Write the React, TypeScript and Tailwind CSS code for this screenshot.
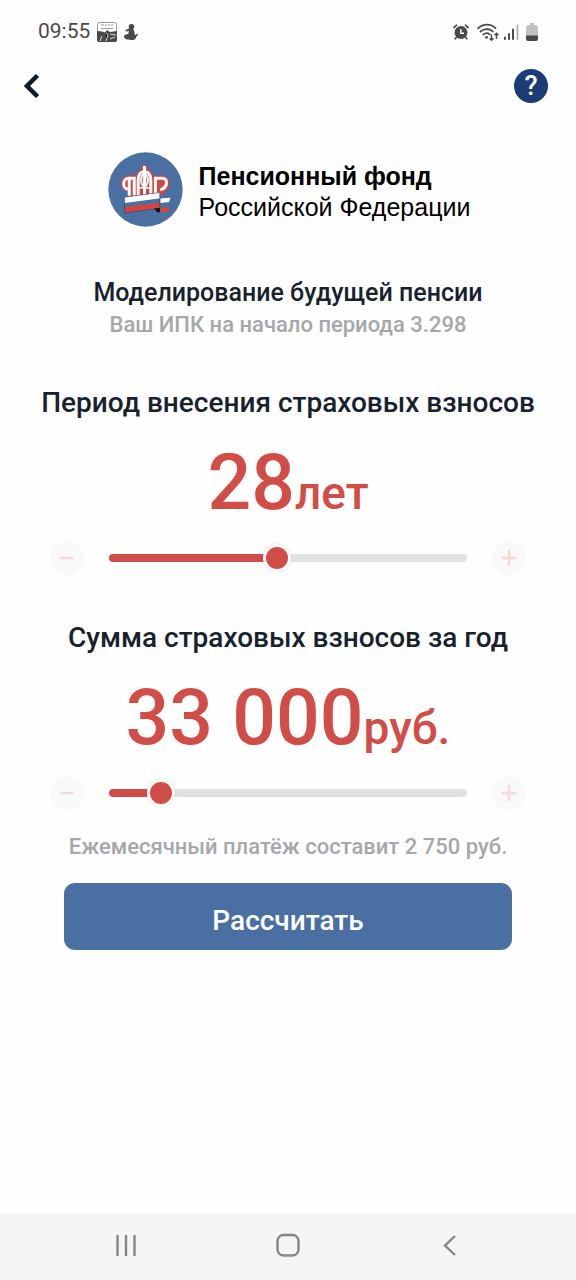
import { useState } from "react";

function AlarmIcon() {
  return (
    <svg className="h-4 w-4" viewBox="0 0 16 16" fill="none" aria-hidden="true">
      <circle cx="8" cy="8.500" r="6.500" fill="#4a4a4a" />
      <path
        d="M1 3.500l2.600-2.300M15 3.500l-2.600-2.300M3.800 13l-1.600 1.800M12.200 13l1.600 1.800"
        stroke="#4a4a4a"
        strokeWidth="1.700"
        strokeLinecap="round"
      />
      <path d="M7.800 5v4.200h3.200" stroke="#fff" strokeWidth="1.400" />
    </svg>
  );
}

function WifiIcon() {
  return (
    <svg className="-mr-1 h-5 w-6" viewBox="0 0 24 20" fill="none" aria-hidden="true">
      <g stroke="#4a4a4a" strokeWidth="1.8" strokeLinecap="round">
        <path d="M2 6.4C7.2 1.4 14.800 1.400 19.500 6.200" />
        <path d="M4.500 9.600c3.700-3.400 8.700-3.400 12.300-.2" />
        <path d="M7.300 12.600c2.200-1.800 4.600-1.800 6.500-.2" />
      </g>
      <circle cx="10.500" cy="15.300" r="1.400" fill="#4a4a4a" />
      <path
        d="M15.500 12.500v5.600m-1.900-1.800l1.900 2 1.900-2M20.500 17v-5.600m-1.900 1.800l1.900-2 1.900 2"
        stroke="#4a4a4a"
        strokeWidth="1.400"
      />
    </svg>
  );
}

function SignalIcon() {
  return (
    <svg className="h-4 w-4" viewBox="0 0 16 16" strokeWidth="2" strokeLinecap="round" aria-hidden="true">
      <path d="M2 13.500V15M6 10v5M10 5.500V15" stroke="#4a4a4a" />
      <path d="M14.500 1.500V15" stroke="#b5b5b5" />
    </svg>
  );
}

function BatteryIcon() {
  return (
    <svg className="h-[18px] w-3" viewBox="0 0 12 18" aria-hidden="true">
      <path d="M4 0h4v2h2a2 2 0 012 2v9H0V4a2 2 0 012-2h2z" fill="#c2c2c2" />
      <path d="M0 12.500h12V16a2 2 0 01-2 2H2a2 2 0 01-2-2z" fill="#4a4a4a" />
    </svg>
  );
}

function PictureIcon() {
  return (
    <svg className="h-5 w-5" viewBox="0 0 20 20" aria-hidden="true">
      <rect x=".5" y=".5" width="19" height="19" rx="2" fill="#fff" stroke="#999" />
      <path d="M4 3h3M8 3h2M11 3h2M14 3h2M4 6.500h12" stroke="#999" strokeWidth="1" />
      <path
        d="M0 9l5 .5 3 1L10 8l3 2 7-1v9a2 2 0 01-2 2H2a2 2 0 01-2-2z"
        fill="#4a4a4a"
      />
      <path d="M3 19l2-5M9 11l2 2-2 6M13 12l6 1M13 17l5-2" stroke="#ddd" strokeWidth="1" />
    </svg>
  );
}

function FigureIcon() {
  return (
    <svg className="h-4 w-[14px]" viewBox="0 0 14 16" aria-hidden="true">
      <circle cx="7.500" cy="2.800" r="2.800" fill="#4a4a4a" />
      <path
        d="M6 4L1.500 6l.4 1.400L5 7l-.8 3C2 10 0 11 0 12.600 0 15 3 16 7 16c3 0 5-1 5-2.600 0-1 2-1.400 2-3.400h-1.400c-.4 1-1 1.400-2 .6C11 8.500 10 6 9 5z"
        fill="#4a4a4a"
      />
    </svg>
  );
}

function FundLogo() {
  return (
    <svg className="h-[75px] w-[75px] shrink-0" viewBox="56 38 226 226" aria-hidden="true">
      <circle cx="169" cy="151" r="112" fill="#4a70a3" />
      {/* crown */}
      <g fill="none">
        <g stroke="#d8433f" strokeWidth="18" strokeLinejoin="round" strokeLinecap="round">
          <path
            fill="#d8433f"
            d="M116 147c-16 0-16-30 2-30h17v48M147 164v-42c0-34 38-34 38 0v40M166 86v76M198 158v-41h21c20 0 18 30-5 36v8"
          />
        </g>
        <g stroke="#fff" strokeWidth="9">
          <path d="M115 150c-16-2-16-33 3-33h17v52M120 118v52" />
          <path d="M147 168v-46c0-34 38-34 38 0v42" />
          <path d="M166 80v86" />
          <ellipse cx="166" cy="123" rx="10" ry="18" strokeWidth="6" />
          <path d="M147 146h38" strokeWidth="5" />
          <path d="M199 162v-45h20c20 0 18 29-6 35" />
        </g>
      </g>
      {/* ribbon */}
      <path d="M106 174L212 160v19L106 193z" fill="#fff" />
      <path d="M106 192L212 178v15L106 205z" fill="#4a70a3" />
      <path d="M106 204L212 191v16L106 222z" fill="#d8433f" />
      <path d="M106 174L212 160v47L106 222z" fill="none" stroke="#26375a" strokeWidth="1.500" />
      <path d="M214 178l30-2-4 13-26 3z" fill="#fff" />
      <path d="M214 207l28-3-4 13-26 4z" fill="#d8433f" />
      <path d="M195 209l18-3v11l-7 4z" fill="#111" />
    </svg>
  );
}

type SliderProps = {
  label: string;
  value: number;
  max: number;
  step: number;
  onChange: (value: number) => void;
};

const roundButton =
  "flex h-[34px] w-[34px] shrink-0 items-center justify-center rounded-full bg-[#f9f9f9]";

function Slider({ label, value, max, step, onChange }: SliderProps) {
  const percent = (value / max) * 100;

  return (
    <div className="mt-0.5 flex h-9 items-center gap-[25px]">
      <button
        type="button"
        aria-label="Уменьшить"
        className={roundButton}
        onClick={() => onChange(Math.max(0, value - step))}
      >
        <svg className="h-4 w-4" viewBox="0 0 16 16" aria-hidden="true">
          <path d="M1.500 8h13" stroke="#f8d9d8" strokeWidth="2.500" />
        </svg>
      </button>
      <input
        type="range"
        aria-label={label}
        min={0}
        max={max}
        step={step}
        value={value}
        onChange={(e) => onChange(Number(e.target.value))}
        className="h-2 min-w-0 flex-1 appearance-none rounded-full bg-[#e2e2e2] [&::-webkit-slider-thumb]:h-7 [&::-webkit-slider-thumb]:w-7 [&::-webkit-slider-thumb]:appearance-none [&::-webkit-slider-thumb]:rounded-full [&::-webkit-slider-thumb]:border-[3px] [&::-webkit-slider-thumb]:border-solid [&::-webkit-slider-thumb]:border-[#fbfafa] [&::-webkit-slider-thumb]:bg-[#d14d47] [&::-webkit-slider-thumb]:shadow-[0_0_3px_rgba(0,0,0,0.12)]"
        style={{
          backgroundImage: `linear-gradient(to right, #d14d47 ${percent}%, #e2e2e2 ${percent}%)`,
        }}
      />
      <button
        type="button"
        aria-label="Увеличить"
        className={roundButton}
        onClick={() => onChange(Math.min(max, value + step))}
      >
        <svg className="h-4 w-4" viewBox="0 0 16 16" aria-hidden="true">
          <path d="M.5 8h15M8 0v16" stroke="#f8d9d8" strokeWidth="2.500" />
        </svg>
      </button>
    </div>
  );
}

function formatNumber(value: number) {
  return String(value).replace(/\B(?=(\d{3})+$)/g, " ");
}

export default function App() {
  const [years, setYears] = useState(28);
  const [amount, setAmount] = useState(33000);

  return (
    <div className="flex min-h-screen flex-col bg-[#fefefe] font-[Roboto,sans-serif] text-[#18222d]">
      {/* status bar */}
      <div className="flex h-16 items-center justify-between px-[38px] text-[#4a4a4a]">
        <div className="flex items-center gap-[7px]">
          <span className="text-[21px]">09:55</span>
          <PictureIcon />
          <FigureIcon />
        </div>
        <div className="flex items-center gap-[7px]">
          <AlarmIcon />
          <WifiIcon />
          <SignalIcon />
          <BatteryIcon />
        </div>
      </div>

      <header className="flex h-11 items-center justify-between pr-7 pl-6">
        <button type="button" aria-label="Назад">
          <svg className="h-6 w-4" viewBox="0 0 16 24" fill="none" aria-hidden="true">
            <path d="M13.500 1.500L3 12l10.500 10.500" stroke="#0f1c2b" strokeWidth="4.500" />
          </svg>
        </button>
        <button
          type="button"
          aria-label="Справка"
          className="flex h-[34px] w-[34px] items-center justify-center rounded-full bg-[#1b3c74] text-[27px] leading-none font-medium text-white"
        >
          ?
        </button>
      </header>

      <main className="flex-1 px-[50px] text-center">
        <div className="mt-11 flex items-center justify-center gap-4 pl-0.5 text-left font-['Liberation_Sans',sans-serif] text-black">
          <FundLogo />
          <p className="pt-1 text-[25px] leading-[31px]">
            <span className="block font-bold">Пенсионный фонд</span>
            Российской Федерации
          </p>
        </div>

        <h1 className="mt-[50px] text-[25px] leading-8 font-medium">
          Моделирование будущей пенсии
        </h1>
        <p className="text-[22px] leading-8 font-medium text-[#a5a8aa]">
          Ваш ИПК на начало периода 3.298
        </p>

        <section>
          <h2 className="-mx-8 mt-11 text-[28px] leading-9 font-medium">
            Период внесения страховых взносов
          </h2>
          <p className="mt-[17px] text-[77px] leading-[90px] font-medium text-[#d14d47]">
            {years}
            <span className="text-[46px]">лет</span>
          </p>
          <Slider
            label="Период внесения страховых взносов"
            value={years}
            max={60}
            step={1}
            onChange={setYears}
          />
        </section>

        <section>
          <h2 className="-mx-8 mt-11 text-[28px] leading-9 font-medium">
            Сумма страховых взносов за год
          </h2>
          <p className="mt-[17px] text-[77px] leading-[90px] font-medium text-[#d14d47]">
            {formatNumber(amount)}
            <span className="text-[46px]">руб.</span>
          </p>
          <Slider
            label="Сумма страховых взносов за год"
            value={amount}
            max={290000}
            step={1000}
            onChange={setAmount}
          />
        </section>

        <p className="mt-5 text-[22px] leading-8 font-medium text-[#a5a8aa]">
          Ежемесячный платёж составит {formatNumber(Math.round(amount / 12))} руб.
        </p>
        <div className="mt-5 px-[14px]">
          <button
            type="button"
            className="h-[67px] w-full rounded-[11px] bg-[#4a70a3] pt-2 text-[28px] font-medium text-white"
          >
            Рассчитать
          </button>
        </div>
      </main>

      <nav className="flex h-[67px] items-center justify-between bg-[#f5f5f5] px-[114px] pb-1">
        <button type="button" aria-label="Недавние">
          <svg className="h-6 w-6" viewBox="0 0 24 24" aria-hidden="true">
            <path d="M3.500 3v19M12 3v19M20.500 3v19" stroke="#858585" strokeWidth="2.400" strokeLinecap="round" />
          </svg>
        </button>
        <button type="button" aria-label="Домой">
          <svg className="h-6 w-6" viewBox="0 0 24 24" fill="none" aria-hidden="true">
            <rect x="1.500" y="2" width="21" height="20.500" rx="6" stroke="#858585" strokeWidth="2.400" />
          </svg>
        </button>
        <button type="button" aria-label="Назад">
          <svg className="h-6 w-6" viewBox="0 0 24 24" fill="none" aria-hidden="true">
            <path d="M17 3L7 12.500 17 22" stroke="#858585" strokeWidth="2.400" />
          </svg>
        </button>
      </nav>
    </div>
  );
}
